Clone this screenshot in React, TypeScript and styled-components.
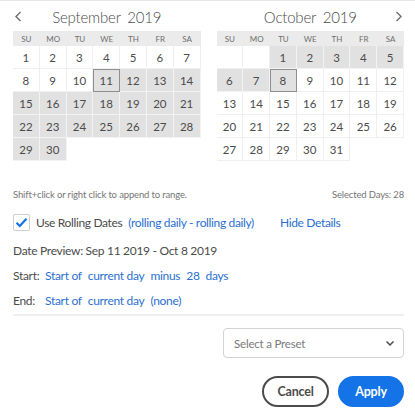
import React from "react";
import styled, { createGlobalStyle } from "styled-components";

const GlobalStyle = createGlobalStyle`
  html, body { margin: 0; padding: 0; background: #fff; }
  body { font-family: Lato, "Open Sans", sans-serif; color: #4b4b4b; }
  * { box-sizing: border-box; }
`;

const Panel = styled.div`
  width: 415px;
  height: 412px;
  border-top: 1px solid #e6e6e6;
  padding: 0 11px 0 13px;
  display: flex;
  flex-direction: column;
`;

const CalendarsRow = styled.div`
  display: flex;
  gap: 16px;
`;

const Month = styled.div`
  width: 188px;
`;

const MonthHeader = styled.div`
  height: 30px;
  display: grid;
  grid-template-columns: 20px 1fr 20px;
  align-items: center;
`;

const MonthTitle = styled.div`
  text-align: center;
  font-size: 15px;
  font-weight: 300;
  color: #4b4b4b;
  word-spacing: 3px;
  letter-spacing: -0.2px;
  padding-top: 2px;
`;

const ArrowBtn = styled.div<{ $side: "left" | "right" }>`
  display: flex;
  justify-content: ${(p) => (p.$side === "left" ? "flex-start" : "flex-end")};
  padding: 0 ${(p) => (p.$side === "left" ? "0 0 1px" : "1px 0 0")};
`;

const Grid = styled.div`
  display: grid;
  grid-template-columns: repeat(7, 1fr);
`;

const DayLabel = styled.div`
  height: 15px;
  background: #ebebeb;
  font-size: 8px;
  color: #6e6e6e;
  display: flex;
  align-items: center;
  justify-content: center;
`;

const DayCell = styled.div<{ $sel: boolean; $edge: boolean }>`
  height: 23px;
  display: flex;
  align-items: center;
  justify-content: center;
  font-size: 11.5px;
  color: #4b4b4b;
  background: ${(p) => (p.$sel ? "#e1e1e1" : "#fff")};
  border-right: 1px solid ${(p) => (p.$sel ? "#f3f3f3" : "#efefef")};
  border-bottom: 1px solid ${(p) => (p.$sel ? "#f3f3f3" : "#efefef")};
  ${(p) => (p.$edge ? "outline: 1px solid #8f8f8f; outline-offset: -1px;" : "")}
`;

const HintRow = styled.div`
  margin-top: 28px;
  display: flex;
  justify-content: space-between;
  font-size: 9.5px;
  color: #757575;
  letter-spacing: -0.15px;
`;

const RollingRow = styled.div`
  margin-top: 14px;
  display: flex;
  align-items: center;
  font-size: 12px;
  letter-spacing: -0.35px;
`;

const Checkbox = styled.div`
  width: 17px;
  height: 17px;
  border: 1px solid #cfcfcf;
  border-radius: 2px;
  display: flex;
  align-items: center;
  justify-content: center;
  margin-right: 6px;
`;

const Link = styled.span<{ $gap?: number }>`
  color: #2b6fd1;
  margin-left: ${(p) => p.$gap ?? 0}px;
`;

const Line = styled.div<{ $mt: number }>`
  margin-top: ${(p) => p.$mt}px;
  font-size: 12px;
  letter-spacing: -0.3px;
  display: flex;
  align-items: center;
`;

const Label = styled.span<{ $w: number }>`
  width: ${(p) => p.$w}px;
`;

const Separator = styled.div`
  margin-top: 6px;
  height: 2px;
  background: #efefef;
`;

const SelectRow = styled.div`
  margin-top: 12px;
  display: flex;
  justify-content: flex-end;
`;

const SelectBox = styled.div`
  width: 181px;
  height: 30px;
  border: 1px solid #d3d3d3;
  border-radius: 4px;
  display: flex;
  align-items: center;
  justify-content: space-between;
  padding: 0 8px 0 10px;
  font-size: 11.5px;
  letter-spacing: -0.2px;
  color: #7a7a7a;
`;

const ButtonRow = styled.div`
  margin-top: 18px;
  display: flex;
  justify-content: flex-end;
  gap: 9px;
`;

const PillButton = styled.button<{ $primary?: boolean }>`
  height: 31px;
  width: ${(p) => (p.$primary ? 66 : 67)}px;
  border-radius: 16px;
  font-family: Lato, sans-serif;
  font-weight: 700;
  font-size: 12.5px;
  letter-spacing: -0.2px;
  cursor: pointer;
  border: 2px solid ${(p) => (p.$primary ? "#1473e6" : "#4b4b4b")};
  background: ${(p) => (p.$primary ? "#1473e6" : "#fff")};
  color: ${(p) => (p.$primary ? "#fff" : "#4b4b4b")};
  padding: 0;
`;

const DAYS = ["SU", "MO", "TU", "WE", "TH", "FR", "SA"];

type MonthData = {
  title: string;
  offset: number;
  days: number;
  isSel: (d: number) => boolean;
  edge: number;
  arrow: "left" | "right";
};

const months: MonthData[] = [
  { title: "September 2019", offset: 0, days: 30, isSel: (d) => d >= 11, edge: 11, arrow: "left" },
  { title: "October 2019", offset: 2, days: 31, isSel: (d) => d <= 8, edge: 8, arrow: "right" },
];

const Chevron = ({ dir }: { dir: "left" | "right" }) => (
  <svg width="8" height="11" viewBox="0 0 8 11">
    <path
      d={dir === "left" ? "M6.5 1 L2 5.5 L6.5 10" : "M1.5 1 L6 5.5 L1.5 10"}
      fill="none"
      stroke="#6e6e6e"
      strokeWidth="1.4"
    />
  </svg>
);

const MonthView = ({ m }: { m: MonthData }) => (
  <Month>
    <MonthHeader>
      <ArrowBtn $side="left">{m.arrow === "left" && <Chevron dir="left" />}</ArrowBtn>
      <MonthTitle>{m.title}</MonthTitle>
      <ArrowBtn $side="right">{m.arrow === "right" && <Chevron dir="right" />}</ArrowBtn>
    </MonthHeader>
    <Grid>
      {DAYS.map((d) => (
        <DayLabel key={d}>{d}</DayLabel>
      ))}
      {Array.from({ length: m.offset }).map((_, i) => (
        <DayCell key={"e" + i} $sel={false} $edge={false} />
      ))}
      {Array.from({ length: m.days }).map((_, i) => {
        const d = i + 1;
        return (
          <DayCell key={d} $sel={m.isSel(d)} $edge={d === m.edge}>
            {d}
          </DayCell>
        );
      })}
    </Grid>
  </Month>
);

export default function App() {
  return (
    <>
      <GlobalStyle />
      <Panel>
        <CalendarsRow>
          {months.map((m) => (
            <MonthView key={m.title} m={m} />
          ))}
        </CalendarsRow>
        <HintRow>
          <span>Shift+click or right click to append to range.</span>
          <span>Selected Days: 28</span>
        </HintRow>
        <RollingRow>
          <Checkbox>
            <svg width="13" height="11" viewBox="0 0 13 11">
              <path d="M1.5 5.8 L4.8 9 L11.5 1.8" fill="none" stroke="#1473e6" strokeWidth="2.2" />
            </svg>
          </Checkbox>
          <span>Use Rolling Dates</span>
          <Link $gap={6}>(rolling daily - rolling daily)</Link>
          <Link $gap={26}>Hide Details</Link>
        </RollingRow>
        <Line $mt={12}>Date Preview: Sep 11 2019 - Oct 8 2019</Line>
        <Line $mt={10}>
          <Label $w={32}>Start:</Label>
          <Link>Start of</Link>
          <Link $gap={6}>current day</Link>
          <Link $gap={6}>minus</Link>
          <Link $gap={6}>28</Link>
          <Link $gap={6}>days</Link>
        </Line>
        <Line $mt={10}>
          <Label $w={32}>End:</Label>
          <Link>Start of</Link>
          <Link $gap={6}>current day</Link>
          <Link $gap={6}>(none)</Link>
        </Line>
        <Separator />
        <SelectRow>
          <SelectBox>
            <span>Select a Preset</span>
            <svg width="10" height="7" viewBox="0 0 10 7">
              <path d="M1.5 1.5 L5 5 L8.5 1.5" fill="none" stroke="#4b4b4b" strokeWidth="1.5" />
            </svg>
          </SelectBox>
        </SelectRow>
        <ButtonRow>
          <PillButton>Cancel</PillButton>
          <PillButton $primary>Apply</PillButton>
        </ButtonRow>
      </Panel>
    </>
  );
}
